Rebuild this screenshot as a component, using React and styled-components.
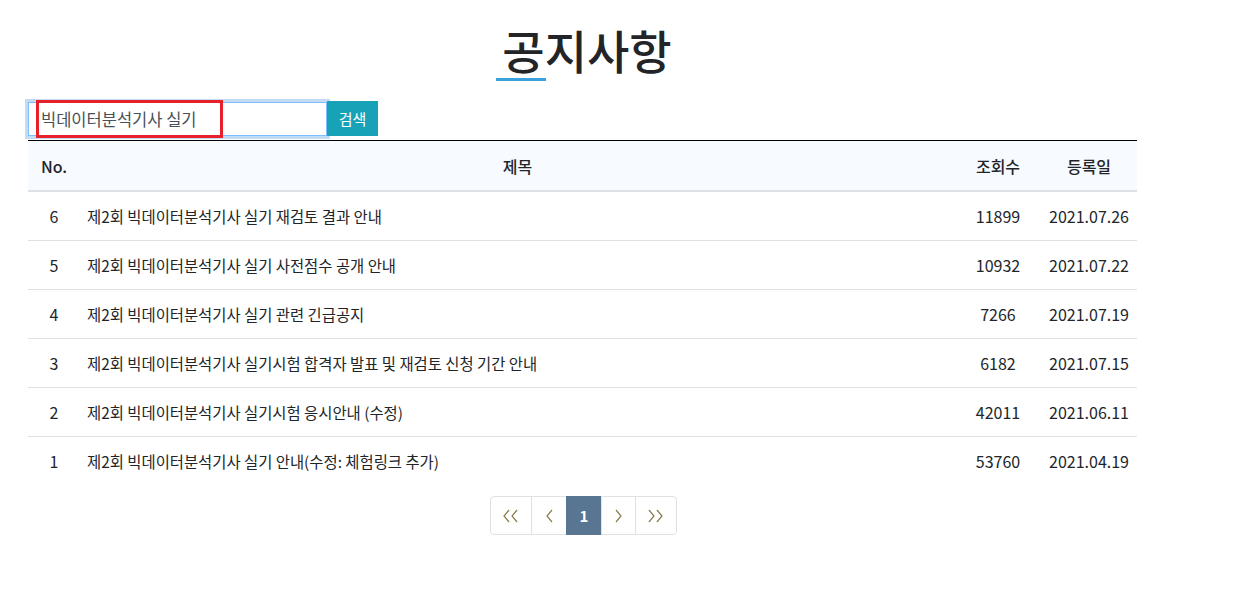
import styled, { createGlobalStyle } from "styled-components";

const GlobalStyle = createGlobalStyle`
    body {
        margin: 0;
        font-family: "Noto Sans CJK KR", "Noto Sans", sans-serif;
        color: #212529;
        background: #fff;
    }
`;

const Page = styled.div`
    width: 1109px;
    margin-left: 28px;
`;

const Title = styled.h1`
    margin: 0;
    padding: 21px 0 0 9px;
    height: 82px;
    box-sizing: border-box;
    text-align: center;
    font-size: 46px;
    line-height: 56px;
    font-weight: 500;
    color: #222428;
`;

const FirstChar = styled.span`
    position: relative;
    &::after {
        content: "";
        position: absolute;
        left: -6px;
        bottom: 1px;
        width: 50px;
        height: 3px;
        background: #3ba1dc;
    }
`;

const SearchBar = styled.form`
    position: relative;
    display: flex;
    margin-top: 19px;
    height: 35px;
`;

const SearchInput = styled.input`
    box-sizing: border-box;
    width: 299px;
    height: 34px;
    margin-top: 1px;
    padding: 0 12px;
    border: 1px solid #80bdff;
    box-shadow: 0 0 0 3px #c3dcf5;
    outline: none;
    font-family: inherit;
    font-size: 16.5px;
    color: #495057;
`;

const SearchButton = styled.button`
    width: 51px;
    height: 35px;
    border: none;
    background: #17a2b8;
    color: #fff;
    font-family: inherit;
    font-size: 15px;
    padding: 0;
    position: relative;
    z-index: 1;
`;

const Highlight = styled.div`
    position: absolute;
    left: 8px;
    top: -1px;
    width: 187px;
    height: 38px;
    box-sizing: border-box;
    border: 3px solid #e8202a;
    pointer-events: none;
    z-index: 2;
`;

const Table = styled.table`
    width: 100%;
    margin-top: 4px;
    border-collapse: collapse;
    border-top: 1px solid #000;
    font-size: 16px;
`;

const HeadRow = styled.tr`
    background: #f7faff;
    border-bottom: 2px solid #dee2e6;
`;

const Th = styled.th`
    height: 49px;
    padding: 0;
    font-weight: 500;
    text-align: center;
    width: ${p => p.$w || "auto"};
`;

const Row = styled.tr`
    & + & {
        border-top: 1px solid #dee2e6;
    }
`;

const Td = styled.td`
    height: 48px;
    padding: 0 ${p => (p.$left ? "7px" : "0")};
    text-align: ${p => (p.$left ? "left" : "center")};
    font-size: ${p => (p.$left ? "15.4px" : "16px")};
`;

const Pager = styled.nav`
    display: flex;
    justify-content: center;
    margin-top: 11px;
    padding-left: 2px;
`;

const PageList = styled.ul`
    display: flex;
    margin: 0;
    padding: 0;
    list-style: none;
`;

const PageItem = styled.li`
    box-sizing: border-box;
    width: ${p => p.$w}px;
    height: 39px;
    display: flex;
    align-items: center;
    justify-content: center;
    border: 1px solid #dee2e6;
    margin-left: -1px;
    background: ${p => (p.$active ? "#587591" : "#fff")};
    border-color: ${p => (p.$active ? "#587591" : "#dee2e6")};
    color: #fff;
    font-size: 15px;
    font-weight: 700;
    &:first-child {
        border-radius: 4px 0 0 4px;
        margin-left: 0;
    }
    &:last-child {
        border-radius: 0 4px 4px 0;
    }
`;

const Chevron = ({ dir = "left", double }) => {
    const one = dir === "left" ? "M6 1 L1 7 L6 13" : "M1 1 L6 7 L1 13";
    const w = double ? 16 : 7;
    return (
        <svg width={w} height="14" viewBox={`0 0 ${w} 14`} fill="none" stroke="#8b7b4c" strokeWidth="1.2">
            <path d={one} />
            {double && <path d={one} transform="translate(8 0)" />}
        </svg>
    );
};

const notices = [
    { no: 6, title: "제2회 빅데이터분석기사 실기 재검토 결과 안내", views: 11899, date: "2021.07.26" },
    { no: 5, title: "제2회 빅데이터분석기사 실기 사전점수 공개 안내", views: 10932, date: "2021.07.22" },
    { no: 4, title: "제2회 빅데이터분석기사 실기 관련 긴급공지", views: 7266, date: "2021.07.19" },
    { no: 3, title: "제2회 빅데이터분석기사 실기시험 합격자 발표 및 재검토 신청 기간 안내", views: 6182, date: "2021.07.15" },
    { no: 2, title: "제2회 빅데이터분석기사 실기시험 응시안내 (수정)", views: 42011, date: "2021.06.11" },
    { no: 1, title: "제2회 빅데이터분석기사 실기 안내(수정: 체험링크 추가)", views: 53760, date: "2021.04.19" },
];

function App() {
    return (
        <Page>
            <GlobalStyle />
            <Title><FirstChar>공</FirstChar>지사항</Title>
            <SearchBar onSubmit={e => e.preventDefault()}>
                <SearchInput defaultValue="빅데이터분석기사 실기" />
                <SearchButton type="submit">검색</SearchButton>
                <Highlight />
            </SearchBar>
            <Table>
                <thead>
                    <HeadRow>
                        <Th $w="52px">No.</Th>
                        <Th>제목</Th>
                        <Th $w="86px">조회수</Th>
                        <Th $w="96px">등록일</Th>
                    </HeadRow>
                </thead>
                <tbody>
                    {notices.map(n => (
                        <Row key={n.no}>
                            <Td>{n.no}</Td>
                            <Td $left>{n.title}</Td>
                            <Td>{n.views}</Td>
                            <Td>{n.date}</Td>
                        </Row>
                    ))}
                </tbody>
            </Table>
            <Pager>
                <PageList>
                    <PageItem $w={42}><Chevron dir="left" double /></PageItem>
                    <PageItem $w={36}><Chevron dir="left" /></PageItem>
                    <PageItem $w={36} $active>1</PageItem>
                    <PageItem $w={35}><Chevron dir="right" /></PageItem>
                    <PageItem $w={42}><Chevron dir="right" double /></PageItem>
                </PageList>
            </Pager>
        </Page>
    );
}

export default App;
